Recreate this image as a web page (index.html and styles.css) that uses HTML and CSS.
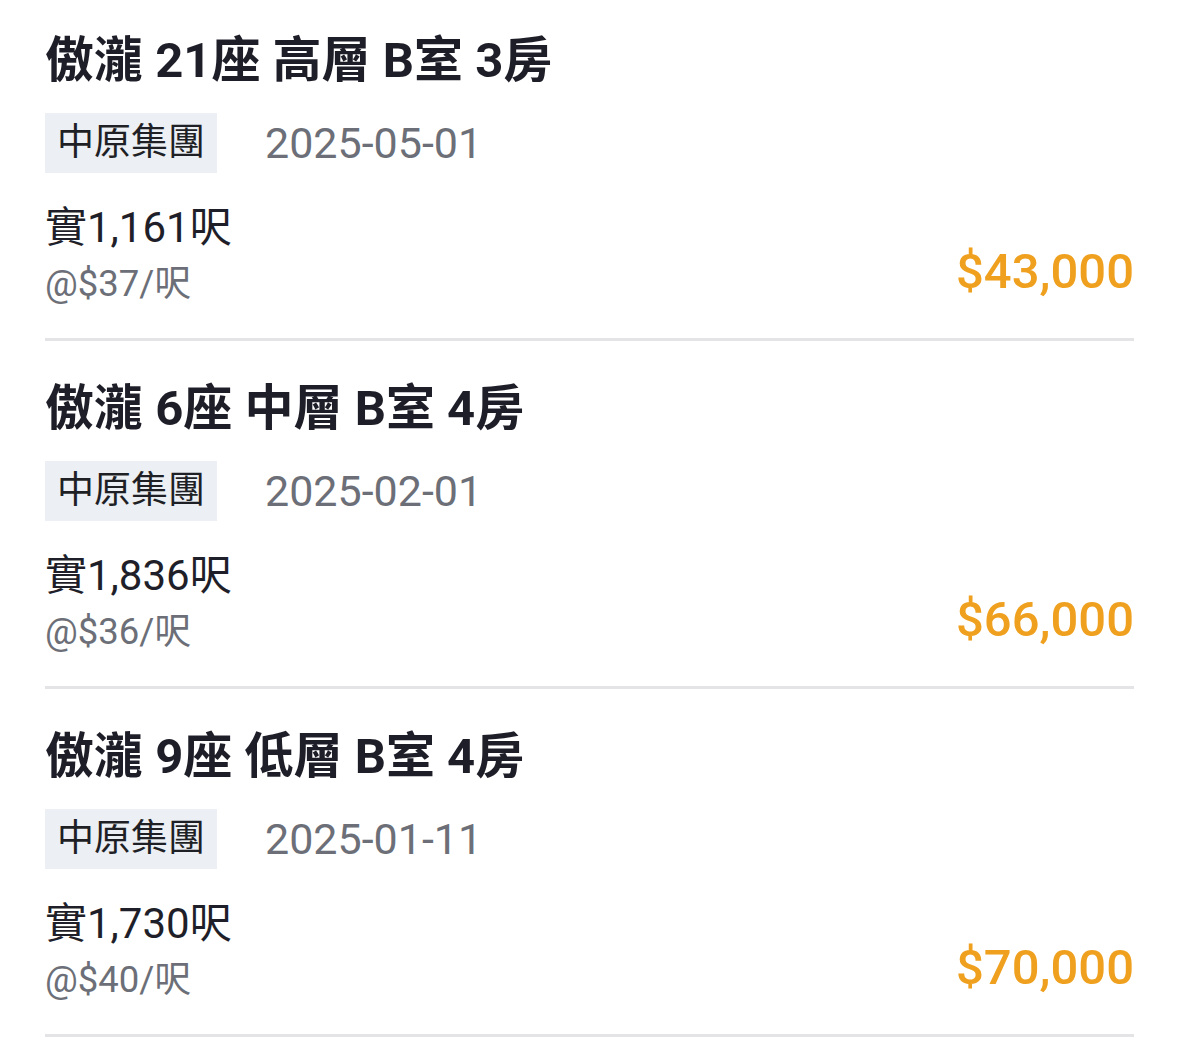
FILE: index.html
```html
<!DOCTYPE html>
<html lang="zh-Hant">
<head>
<meta charset="utf-8">
<title>成交紀錄</title>
<link rel="stylesheet" href="styles.css">
</head>
<body>
<div class="list">
  <div class="listing">
    <h2 class="title">傲瀧 21座 高層 B室 3房</h2>
    <div class="meta"><span class="agency">中原集團</span><span class="date">2025-05-01</span></div>
    <div class="detail">
      <div class="area-block"><div class="area">實1,161呎</div><div class="unit">@$37/呎</div></div>
      <div class="price">$43,000</div>
    </div>
  </div>
  <div class="listing">
    <h2 class="title">傲瀧 6座 中層 B室 4房</h2>
    <div class="meta"><span class="agency">中原集團</span><span class="date">2025-02-01</span></div>
    <div class="detail">
      <div class="area-block"><div class="area">實1,836呎</div><div class="unit">@$36/呎</div></div>
      <div class="price">$66,000</div>
    </div>
  </div>
  <div class="listing">
    <h2 class="title">傲瀧 9座 低層 B室 4房</h2>
    <div class="meta"><span class="agency">中原集團</span><span class="date">2025-01-11</span></div>
    <div class="detail">
      <div class="area-block"><div class="area">實1,730呎</div><div class="unit">@$40/呎</div></div>
      <div class="price">$70,000</div>
    </div>
  </div>
</div>
</body>
</html>
```
FILE: styles.css
```css
html, body {
  margin: 0;
  padding: 0;
  background: #ffffff;
}
body {
  font-family: Roboto, "Noto Sans CJK TC", sans-serif;
  color: #1f1f2a;
  overflow: hidden;
}
.list {
  padding: 0 45px;
}
.listing {
  padding: 40px 0 30px;
  border-bottom: 3px solid #e4e4e6;
}
.listing:first-child {
  padding-top: 33px;
}
.title {
  margin: 0;
  font-size: 49px;
  line-height: 56px;
  font-weight: 700;
  color: #1e1e29;
}
.meta {
  display: flex;
  align-items: center;
  gap: 48px;
  margin-top: 24px;
}
.agency {
  display: inline-block;
  background: #eceff4;
  color: #1f1f26;
  font-size: 37px;
  line-height: 60px;
  padding: 0 12px;
}
.date {
  font-size: 43px;
  line-height: 60px;
  color: #6c6f77;
}
.detail {
  display: flex;
  justify-content: space-between;
  align-items: flex-end;
  margin-top: 27px;
}
.area {
  font-size: 42px;
  line-height: 56px;
  color: #1f1f2a;
}
.unit {
  font-size: 36.5px;
  line-height: 48px;
  margin-top: 4px;
  color: #6c6f77;
}
.price {
  font-size: 49px;
  line-height: 56px;
  font-weight: 500;
  color: #efa01f;
  margin-bottom: 8px;
}
```
